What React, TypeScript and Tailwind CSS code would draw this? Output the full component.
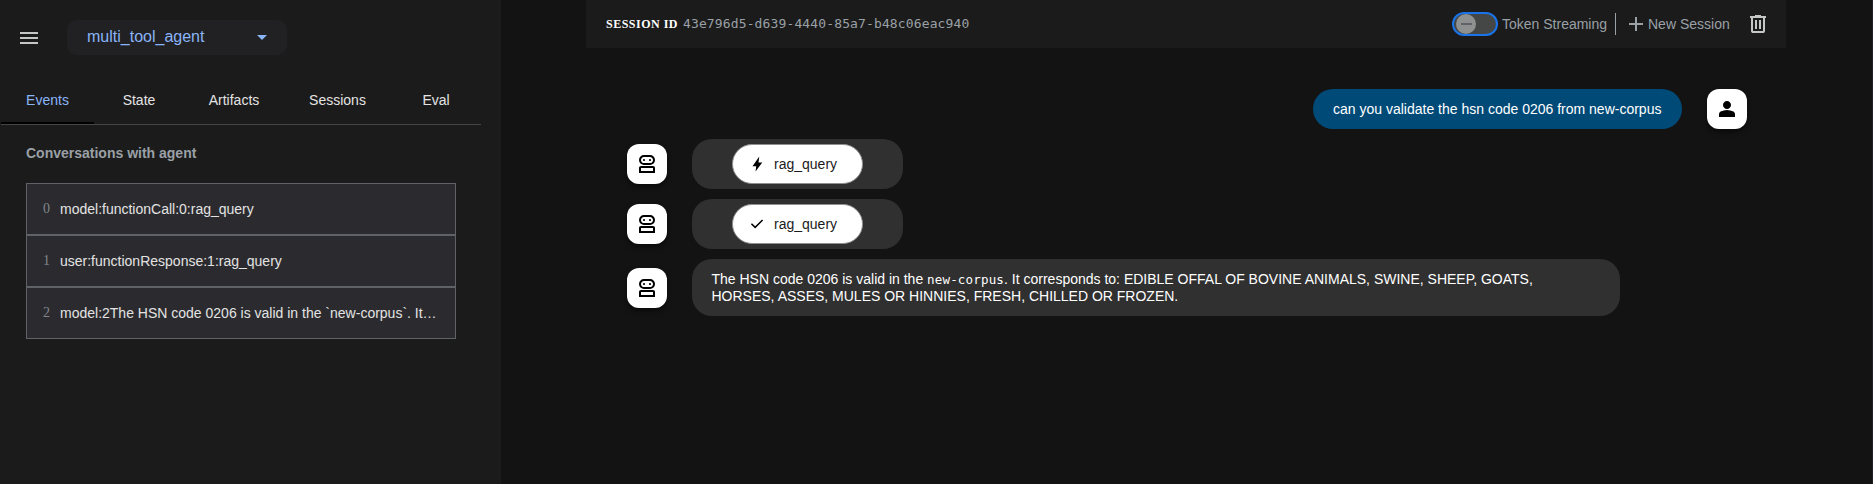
import React from "react";

const events = [
  "model:functionCall:0:rag_query",
  "user:functionResponse:1:rag_query",
  "model:2The HSN code 0206 is valid in the `new-corpus`. It…",
];

const iconPaths = {
  menu: "M120-240v-80h720v80H120Zm0-200v-80h720v80H120Zm0-200v-80h720v80H120Z",
  add: "M440-440H200v-80h240v-240h80v240h240v80H520v240h-80v-240Z",
  trash:
    "M280-120q-33 0-56.500-23.500T200-200v-520h-40v-80h200v-40h240v40h200v80h-40v520q0 33-23.500 56.500T680-120H280Zm400-600H280v520h400v-520ZM360-280h80v-360h-80v360Zm160 0h80v-360h-80v360ZM280-720v520-520Z",
  person:
    "M480-480q-66 0-113-47t-47-113q0-66 47-113t113-47q66 0 113 47t47 113q0 66-47 113t-113 47ZM160-160v-112q0-34 17.500-62.500T224-378q62-31 126-46.500T480-440q66 0 130 15.500T736-378q29 15 46.500 43.500T800-272v112H160Z",
  robot:
    "M160-120v-200q0-33 23.500-56.500T240-400h480q33 0 56.500 23.500T800-320v200H160Zm200-320q-83 0-141.500-58.500T160-640q0-83 58.500-141.500T360-840h240q83 0 141.500 58.500T800-640q0 83-58.500 141.500T600-440H360ZM240-200h480v-120H240v120Zm120-320h240q50 0 85-35t35-85q0-50-35-85t-85-35H360q-50 0-85 35t-35 85q0 50 35 85t85 35Zm0-80q17 0 28.500-11.500T400-640q0-17-11.500-28.500T360-680q-17 0-28.500 11.500T320-640q0 17 11.500 28.500T360-600Zm240 0q17 0 28.500-11.500T640-640q0-17-11.500-28.500T600-680q-17 0-28.500 11.500T560-640q0 17 11.500 28.500T600-600Z",
  bolt: "m400-80 40-280H240l360-520-40 320h200L400-80Z",
  check: "M382-240 154-468l57-57 171 171 367-367 57 57-424 424Z",
};

function Icon({ name, className }: { name: keyof typeof iconPaths; className: string }) {
  return (
    <svg viewBox="0 -960 960 960" fill="currentColor" className={className}>
      <path d={iconPaths[name]} />
    </svg>
  );
}

function Avatar({ name }: { name: "robot" | "person" }) {
  return (
    <div className="flex size-10 shrink-0 items-center justify-center rounded-[12px] bg-white text-black shadow-[0_3px_5px_rgba(0,0,0,0.5)]">
      <Icon name={name} className="size-6" />
    </div>
  );
}

function ToolRow({ icon }: { icon: "bolt" | "check" }) {
  return (
    <div className="flex h-[50px] items-center gap-[25px]">
      <Avatar name="robot" />
      <div className="flex h-[50px] w-[211px] items-center rounded-[20px] bg-[#303030] pl-10">
        <div className="flex h-10 w-[131px] items-center rounded-[20px] border border-[#8e918f] bg-white pl-[15px] text-[#1b1b1b]">
          <Icon name={icon} className="size-[18px] text-black" />
          <span className="ml-2">rag_query</span>
        </div>
      </div>
    </div>
  );
}

export default function App() {
  return (
    <div className="flex h-[484px] w-[1873px] overflow-hidden bg-[#131313] font-['Liberation_Sans',Arial,sans-serif] text-sm text-white">
      <aside className="w-[501px] shrink-0 bg-[#1b1b1b]">
        <div className="flex h-[55px] items-start pt-5 pl-[17px]">
          <Icon name="menu" className="mt-[6px] size-6 text-[#c4c7c5]" />
          <div className="ml-[26px] flex h-[35px] w-[220px] items-center justify-between rounded-[10px] bg-[#212123] pr-5 pl-5 text-base text-[#8ab4f8]">
            <span className="-mt-px">multi_tool_agent</span>
            <svg viewBox="0 0 10 5" className="h-[5px] w-[10px]" fill="currentColor">
              <path d="M0 0h10L5 5z" />
            </svg>
          </div>
        </div>
        <nav className="mt-[21px] ml-px flex h-[49px] w-[480px] border-b border-[#444746] text-[#e3e3e3]">
          <div className="flex w-[93px] items-center justify-center border-b-2 border-black pt-0.5 text-[#8ab4f8]">Events</div>
          <div className="flex w-[90px] items-center justify-center">State</div>
          <div className="flex w-[100px] items-center justify-center">Artifacts</div>
          <div className="flex w-[107px] items-center justify-center">Sessions</div>
          <div className="flex w-[90px] items-center justify-center">Eval</div>
        </nav>
        <h2 className="mt-[18px] ml-[26px] h-5 leading-5 font-bold text-[#9aa0a6]">Conversations with agent</h2>
        <div className="mt-5 ml-[26px] w-[430px]">
          {events.map((text, i) => (
            <div key={i} className="flex h-[52px] items-center border border-[#5f6368] bg-[#2b2b2f] pl-4">
              <span className="w-[17px] shrink-0 font-['Liberation_Serif',serif] text-[#80868b]">{i}</span>
              <span className="whitespace-nowrap text-[#e3e3e3]">{text}</span>
            </div>
          ))}
        </div>
      </aside>
      <main className="w-[1372px] border-r border-[#202028] pl-[85px]">
        <header className="flex h-12 w-[1200px] items-center bg-[#1b1b1b] pl-5 text-[#9aa0a6]">
          <span className="w-[77px] font-['Liberation_Serif',serif] text-xs font-bold tracking-[0.5px] whitespace-nowrap text-white">SESSION ID</span>
          <span className="font-['DejaVu_Sans_Mono',monospace] text-[13px] tracking-[0.13px]">43e796d5-d639-4440-85a7-b48c06eac940</span>
          <div className="ml-auto flex h-6 w-[46px] items-center rounded-full border-2 border-[#1a73e8] bg-[#444746] pl-0.5">
            <div className="flex size-5 items-center justify-center rounded-full bg-[#8e918f]">
              <div className="h-0.5 w-[11px] bg-[#5f6368]" />
            </div>
          </div>
          <span className="ml-1 w-[113px]">Token Streaming</span>
          <div className="h-[22px] w-px bg-[#9aa0a6]" />
          <Icon name="add" className="ml-[8px] size-6" />
          <span className="w-[98px]">New Session</span>
          <Icon name="trash" className="mr-4 size-6 text-[#c4c7c5]" />
        </header>
        <section className="w-[1200px] pt-[41px]">
          <div className="flex items-center justify-end gap-[25px] pr-[39px]">
            <div className="flex h-10 w-[369px] items-center rounded-[20px] bg-[#004a77] pl-5 whitespace-nowrap">
              can you validate the hsn code 0206 from new-corpus
            </div>
            <Avatar name="person" />
          </div>
          <div className="mt-[10px] flex flex-col gap-[10px] pl-[41px]">
            <ToolRow icon="bolt" />
            <ToolRow icon="check" />
            <div className="flex items-center gap-[25px]">
              <Avatar name="robot" />
              <div className="h-[57px] w-[928px] rounded-[20px] bg-[#303030] pt-[12px] pl-[19.5px] leading-[17px] whitespace-nowrap">
                The HSN code 0206 is valid in the{" "}
                <code className="font-['DejaVu_Sans_Mono',monospace] text-[12.5px] leading-none tracking-[0.17px]">new-corpus</code>
                . It corresponds to: EDIBLE OFFAL OF BOVINE ANIMALS, SWINE, SHEEP, GOATS,
                <br />
                HORSES, ASSES, MULES OR HINNIES, FRESH, CHILLED OR FROZEN.
              </div>
            </div>
          </div>
        </section>
      </main>
    </div>
  );
}
